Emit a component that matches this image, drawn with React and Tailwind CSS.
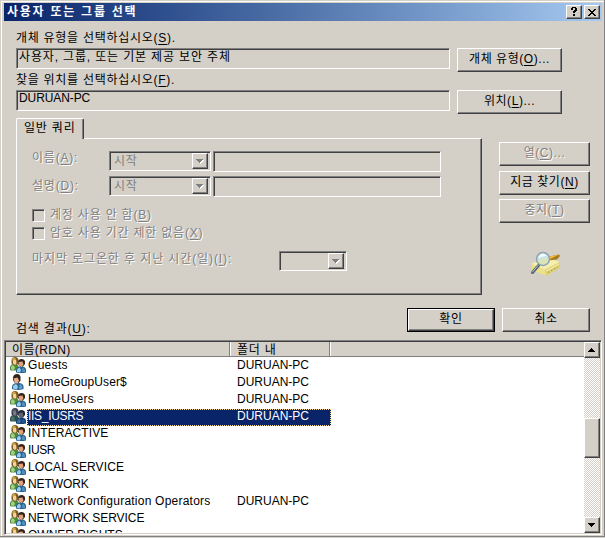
const raised =
  "border border-t-white border-l-white border-r-[#404040] border-b-[#404040] shadow-[inset_-1px_-1px_0_#808080] bg-[#d4d0c8]";
const sunken =
  "border border-t-[#808080] border-l-[#808080] border-r-white border-b-white shadow-[inset_1px_1px_0_#404040] bg-[#d4d0c8]";
const disabled = "text-[#808080] [text-shadow:1px_1px_0_#fff]";

function Key({ children }) {
  return <span className="underline underline-offset-2 decoration-1">{children}</span>;
}

function Button({ className = "", off = false, children }) {
  return (
    <button className={`flex h-6 items-center justify-center pb-[2px] tracking-[0.55px] whitespace-nowrap ${raised} ${off ? disabled : ""} ${className}`}>
      <span>{children}</span>
    </button>
  );
}

function Arrow({ up = false, off = false }) {
  const d = up ? "M3 0h1v1h1v1h1v1h1v1H0V3h1V2h1V1h1z" : "M0 0h7v1H6v1H5v1H4v1H3V3H2V2H1V1H0z";
  return (
    <svg width="8" height="5" viewBox="0 0 8 5" shapeRendering="crispEdges">
      {off && <path d={d} transform="translate(1 1)" fill="#fff" />}
      <path d={d} fill={off ? "#808080" : "#000"} />
    </svg>
  );
}

function Combo({ className = "", children }) {
  return (
    <div className={`flex h-5 items-center justify-between pl-1 pr-[2px] ${sunken} ${className}`}>
      <span className="pb-px text-[#808080]">{children}</span>
      <span className={`flex h-4 w-4 items-center justify-center ${raised}`}>
        <Arrow off />
      </span>
    </div>
  );
}

function Check({ children }) {
  return (
    <label className={`flex h-[18px] items-start gap-[5px] pt-[2px] ${disabled}`}>
      <span className={`h-[13px] w-[13px] ${sunken}`} />
      <span className="-mt-px">{children}</span>
    </label>
  );
}

function GroupIcon({ selected }) {
  return (
    <svg width="16" height="16" viewBox="0 0 16 16">
      <path d="M0 13V10q.5-2.500 3-3h3q2.500.5 3 4v2.500H1z" fill={selected ? "#2b4f4d" : "#4f8a3c"} />
      <path d="M1 12.500V10q.5-1.500 2-2l2 2.500-1 2.500z" fill={selected ? "#4a7468" : "#a2d080"} />
      <path d="M1.500 6.500V3Q2 0 5 0t3.500 3v3.500l-2 1.500h-3z" fill={selected ? "#343a4c" : "#7d5a1c"} />
      <path d="M2 3Q2.500.5 4.500.5L6 2 3 4z" fill={selected ? "#555868" : "#d0a84e"} />
      <path d="M3 3.500l3-1 .5 4L5 8 3 6.500z" fill={selected ? "#7a7a84" : "#f4d2a0"} />
      <path d="M6 15.500V13q.5-3 3.500-3.500h3Q16 10 16 13v2.500q-5 1-10 0z" fill={selected ? "#153e74" : "#2b648f"} />
      <path d="M7 15v-2q.5-2 2.500-2.500L11 13l-1 2.500z" fill={selected ? "#3d6e9e" : "#9acdeb"} />
      <path d="M12 12l1.500-1.500L15 13v2h-3z" fill={selected ? "#285686" : "#4f8fc0"} />
      <path d="M8 7V4.500Q8.500 2 11.500 2T15 4.500V7l-2 2.500h-3z" fill={selected ? "#1c253a" : "#33231c"} />
      <path d="M8.500 5l4-.5 1 3L11.500 10 9 8.500z" fill={selected ? "#66606c" : "#e2a27a"} />
    </svg>
  );
}

function UserIcon() {
  return (
    <svg width="16" height="16" viewBox="0 0 16 16">
      <path d="M2 15v-2.500Q2.500 9.500 6 9h3.500q4 .5 4 3.500V15q-5.500 2-11.500 0z" fill="#2b648f" />
      <path d="M3 14.500V12.500q.5-2 3-2.500l2 2.500-1 3z" fill="#9acdeb" />
      <path d="M9.500 11l1.500-1 1.500 3-1 2H9z" fill="#5d9cca" />
      <path d="M3 6V3.500Q3.500 0 7 0t3.500 3.500V6.500L8.500 9H5z" fill="#33231c" />
      <path d="M3.500 4.500L7.500 3.500l1.500 3L7.500 9.500 5 9z" fill="#e6ad86" />
    </svg>
  );
}

function FindIcon() {
  return (
    <svg width="32" height="26" viewBox="0 0 32 26">
      <path d="M1 13l15-7 14 5-14 8z" fill="#f6eeae" />
      <path d="M17 6l12-2.500 1 1.500-3 3.500-9 1z" fill="#a87a1c" />
      <path d="M18 6l11-2.500-9 4.500z" fill="#f3bd3e" />
      <path d="M2 13l14 6v5l-5-1-9-4z" fill="#ece08a" />
      <path d="M15 18.500l15-7.500v5.500l-14 8.500z" fill="#ddd070" />
      <path d="M16 20l13-7" stroke="#faf5c2" />
      <path d="M18 21.500l10-5.500" stroke="#8f8433" strokeWidth=".8" strokeDasharray="1.500 2" />
      <path d="M8.500 14.500L2.500 21.500" stroke="#55636f" strokeWidth="3" strokeLinecap="round" />
      <path d="M8 14.500l-5.500 6.500" stroke="#b6c5d0" strokeLinecap="round" />
      <circle cx="13" cy="8" r="6.500" fill="#c9e5ee" fillOpacity=".9" stroke="#8aa2b2" strokeWidth="1.400" />
      <path d="M7.500 10q5-4 11-2-.5 4-5 5.500-5-.5-6-3.500z" fill="#dfe3a8" fillOpacity=".8" />
      <path d="M8.500 7.500q4-3 8-2.500-1-2.500-4-2.500-3.500 1-4 5z" fill="#fff" fillOpacity=".8" />
    </svg>
  );
}

const rows = [
  ["Guests", true, "tracking-[0.3px]"],
  ["HomeGroupUser$", true, "tracking-[0.1px]"],
  ["HomeUsers", true, "tracking-[0.3px]"],
  ["IIS_IUSRS", true, "tracking-[-0.3px]"],
  ["INTERACTIVE", false, "tracking-[0.1px]"],
  ["IUSR", false, "tracking-[-0.4px]"],
  ["LOCAL SERVICE", false, "tracking-[0.1px]"],
  ["NETWORK", false, "tracking-[-0.1px]"],
  ["Network Configuration Operators", true, "tracking-[0.23px]"],
  ["NETWORK SERVICE", false, "tracking-[-0.05px]"],
  ["OWNER RIGHTS", false, "tracking-[0px]"],
];

function Row({ name, pc, track }) {
  const selected = name === "IIS_IUSRS";
  return (
    <div className="flex h-[17px] shrink-0">
      <div className="-mt-px w-[21px] shrink-0 pl-1">
        {name === "HomeGroupUser$" ? <UserIcon /> : <GroupIcon selected={selected} />}
      </div>
      <div
        className={`flex w-[304px] items-start tracking-normal ${
          selected ? "bg-[#0a246a] text-white outline-1 -outline-offset-1 outline-dotted outline-[#f5db95]" : ""
        }`}
      >
        <span className={`w-[210px] shrink-0 pl-px whitespace-nowrap ${track}`}>{name}</span>
        <span>{pc ? "DURUAN-PC" : ""}</span>
      </div>
    </div>
  );
}

export default function App() {
  return (
    <div className="flex h-[538px] w-[605px] flex-col overflow-hidden bg-[#d4d0c8] font-['Liberation_Sans','Noto_Sans_CJK_KR',sans-serif] text-[12px] leading-[14px] tracking-[0.8px] text-black">
      <div className="flex h-[537px] flex-col border-r border-b border-[#808080] pt-px">
        <div className="ml-px flex grow flex-col border-t border-l border-white pt-px pl-[2px]">
          <header className="flex h-[18px] w-[598px] items-center justify-between bg-linear-to-r from-[#0a246a] to-[#a6caf0] pl-[3px] pr-[2px]">
            <h1 className="text-[12px] font-bold tracking-[1.75px] text-white">사용자 또는 그룹 선택</h1>
            <div className="flex gap-[2px]">
              <span className={`flex h-[14px] w-4 items-center justify-center ${raised}`}>
                <svg width="8" height="10" viewBox="0 0 8 10" shapeRendering="crispEdges">
                  <path d="M1 1h1V0h4v1h1v3H6v1H5v1H3V4h1V3h1V1H3v2H1zM3 7h2v2H3z" />
                </svg>
              </span>
              <span className={`flex h-[14px] w-4 items-center justify-center ${raised}`}>
                <svg width="8" height="7" viewBox="0 0 8 7" shapeRendering="crispEdges">
                  <path d="M0 0h2v1h1v1h2V1h1V0h2v1H7v1H6v1H5v1h1v1h1v1h1v1H6V6H5V5H3v1H2v1H0V6h1V5h1V4h1V3H2V2H1V1H0z" />
                </svg>
              </span>
            </div>
          </header>

          <section className="grid h-[97px] grid-cols-[434px_105px] gap-x-[7px] pt-[9px] pl-3">
            <div>
              <p className="h-[18px] pt-px tracking-[0.72px]">개체 유형을 선택하십시오(<Key>S</Key>).</p>
              <div className={`h-[21px] pt-px pl-[2px] tracking-[0.85px] ${sunken}`}>사용자, 그룹, 또는 기본 제공 보안 주체</div>
              <p className="h-[21px] pt-1 tracking-[0.72px]">찾을 위치를 선택하십시오(<Key>F</Key>).</p>
              <div className={`h-[21px] pl-[2px] tracking-[-0.1px] ${sunken}`}>DURUAN-PC</div>
            </div>
            <div className="flex flex-col gap-[18px] pt-[18px]">
              <Button>개체 유형(<Key>O</Key>)...</Button>
              <Button>위치(<Key>L</Key>)...</Button>
            </div>
          </section>

          <section className="flex h-[177px] gap-[17px] pl-3">
            <div className="flex w-[466px] flex-col">
              <div className="z-10 -mb-px h-[21px] w-[68px] rounded-t-[2px] border-t border-l border-r border-t-white border-l-white border-r-[#404040] bg-[#d4d0c8] pt-[2px] pl-[7px] shadow-[inset_-1px_0_0_#808080]">
                일반 쿼리
              </div>
              <div className={`h-[157px] pt-3 pl-[15px] ${raised}`}>
                <div className="flex h-[25px]">
                  <span className={`w-[77px] ${disabled}`}>이름(<Key>A</Key>):</span>
                  <Combo className="w-[102px]">시작</Combo>
                  <div className={`ml-[2px] h-[21px] w-[228px] ${sunken}`} />
                </div>
                <div className="flex h-[31px]">
                  <span className={`w-[77px] pt-[3px] ${disabled}`}>설명(<Key>D</Key>):</span>
                  <Combo className="w-[102px]">시작</Combo>
                  <div className={`ml-[2px] h-[21px] w-[228px] ${sunken}`} />
                </div>
                <Check>계정 사용 안 함(<Key>B</Key>)</Check>
                <Check>암호 사용 기간 제한 없음(<Key>X</Key>)</Check>
                <div className="mt-2 flex">
                  <span className={`w-[247px] pt-px tracking-[0.9px] ${disabled}`}>마지막 로그온한 후 지난 시간(일)(<Key>I</Key>):</span>
                  <Combo className="w-[68px]" />
                </div>
              </div>
            </div>
            <div className="flex w-[91px] flex-col pt-6">
              <Button off>열(<Key>C</Key>)...</Button>
              <Button className="mt-[5px]">지금 찾기(<Key>N</Key>)</Button>
              <Button off className="mt-1">중지(<Key>T</Key>)</Button>
              <div className="mt-7 pl-[31px]"><FindIcon /></div>
            </div>
          </section>

          <section className="flex h-[45px] pt-[13px] pl-3">
            <span className="w-[391px] pt-[14px]">검색 결과(<Key>U</Key>):</span>
            <div className="h-6 w-[88px] border border-black">
              <button className={`flex h-[22px] w-full items-center justify-center pb-[2px] ${raised}`}>확인</button>
            </div>
            <Button className="ml-[7px] w-[88px]">취소</Button>
          </section>

          <section className={`flex h-[195px] w-[598px] p-px ${sunken}`}>
            <div className="flex w-[578px] flex-col overflow-hidden bg-white">
              <div className="flex h-[15px] shrink-0 border-b border-[#808080] bg-[#d4d0c8] leading-[16px]">
                <span className="w-[224px] border-r border-[#808080] pl-[6px] tracking-[0.35px]">이름(RDN)</span>
                <span className="w-[100px] border-r border-l border-r-[#808080] border-l-white pl-[6px]">폴더 내</span>
                <span className="border-l border-white" />
              </div>
              <div className="flex flex-col pt-px">
                {rows.map(([name, pc, track]) => (
                  <Row key={name} name={name} pc={pc} track={track} />
                ))}
              </div>
            </div>
            <div className="flex w-4 flex-col bg-[repeating-conic-gradient(#d4d0c8_0_25%,#fff_0_50%)] bg-[length:2px_2px]">
              <span className={`flex h-4 items-center justify-center ${raised}`}><Arrow up /></span>
              <span className={`mt-[60px] h-10 ${raised}`} />
              <span className={`mt-auto flex h-4 items-center justify-center ${raised}`}><Arrow /></span>
            </div>
          </section>
        </div>
      </div>
    </div>
  );
}
